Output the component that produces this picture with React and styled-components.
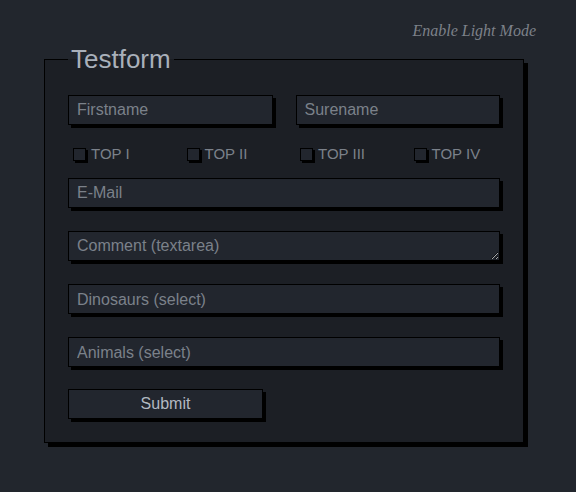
import React from "react";
import styled, { createGlobalStyle } from "styled-components";

const GlobalStyle = createGlobalStyle`
  html, body {
    margin: 0;
    padding: 0;
    background: #22262d;
  }
  body {
    font-family: "Liberation Sans", Arial, sans-serif;
  }
  * {
    box-sizing: border-box;
  }
`;

const Page = styled.div`
  min-height: 492px;
  padding: 21px 40px 0 44px;
`;

const ModeToggle = styled.div`
  text-align: right;
  font-family: "Liberation Serif", "Times New Roman", serif;
  font-style: italic;
  font-size: 16px;
  line-height: 20px;
  color: #7d8189;
  cursor: pointer;
`;

const Form = styled.form`
  margin: 3px 0 0 0;
`;

const Fieldset = styled.fieldset`
  width: 480px;
  min-width: 0;
  margin: 0;
  padding: 0 23px 23px;
  border: 1px solid #000;
  background: #1c1f25;
  box-shadow: 4px 4px 0 #000;
`;

const Legend = styled.legend`
  padding: 0 3px;
  font-size: 26px;
  line-height: 30px;
  color: #a9b0ba;
`;

const Row = styled.div`
  display: grid;
  grid-template-columns: 1fr 1fr;
  gap: 23px;
  margin-top: ${(p) => p.$top || 23}px;
`;

const fieldStyles = `
  display: block;
  width: 100%;
  height: 30px;
  margin: 0;
  padding: 0 8px;
  border: 1px solid #000;
  border-radius: 0;
  background: #22262e;
  box-shadow: 3px 3px 0 #000;
  font-family: "Liberation Sans", Arial, sans-serif;
  font-size: 16px;
  color: #7b818a;
  outline: none;

  &::placeholder {
    color: #7b818a;
  }
`;

const Input = styled.input`
  ${fieldStyles}
`;

const TextArea = styled.textarea`
  ${fieldStyles}
  padding: 5px 8px;
  line-height: 18px;
  resize: vertical;
`;

const Select = styled.select`
  ${fieldStyles}
  appearance: none;
  -webkit-appearance: none;
`;

const Field = styled.div`
  margin-top: ${(p) => p.$top ?? 23}px;
`;

const CheckRow = styled.div`
  display: grid;
  grid-template-columns: repeat(4, 113.5px);
  margin-top: 21px;
  height: 16px;
`;

const CheckLabel = styled.label`
  display: flex;
  align-items: center;
  font-size: 15px;
  line-height: 16px;
  color: #7b818a;
`;

const Check = styled.input.attrs({ type: "checkbox" })`
  appearance: none;
  -webkit-appearance: none;
  width: 13px;
  height: 13px;
  margin: 0 5px;
  border: 1px solid #000;
  background: #22262e;
  box-shadow: 2px 2px 0 #000;
`;

const SubmitButton = styled.button`
  display: block;
  width: 195px;
  height: 30px;
  margin-top: 22px;
  border: 1px solid #000;
  border-radius: 0;
  background: #22262e;
  box-shadow: 3px 3px 0 #000;
  font-family: "Liberation Sans", Arial, sans-serif;
  font-size: 16px;
  color: #b3b9c2;
  cursor: pointer;
`;

const tops = ["TOP I", "TOP II", "TOP III", "TOP IV"];

export default function App() {
  return (
    <>
      <GlobalStyle />
      <Page>
        <ModeToggle>Enable Light Mode</ModeToggle>
        <Form onSubmit={(e) => e.preventDefault()}>
          <Fieldset>
            <Legend>Testform</Legend>
            <Row $top={21}>
              <Input placeholder="Firstname" />
              <Input placeholder="Surename" />
            </Row>
            <CheckRow>
              {tops.map((t) => (
                <CheckLabel key={t}>
                  <Check />
                  {t}
                </CheckLabel>
              ))}
            </CheckRow>
            <Field $top={16}>
              <Input placeholder="E-Mail" />
            </Field>
            <Field>
              <TextArea placeholder="Comment (textarea)" />
            </Field>
            <Field>
              <Select defaultValue="">
                <option value="" disabled>Dinosaurs (select)</option>
              </Select>
            </Field>
            <Field>
              <Select defaultValue="">
                <option value="" disabled>Animals (select)</option>
              </Select>
            </Field>
            <SubmitButton type="submit">Submit</SubmitButton>
          </Fieldset>
        </Form>
      </Page>
    </>
  );
}
